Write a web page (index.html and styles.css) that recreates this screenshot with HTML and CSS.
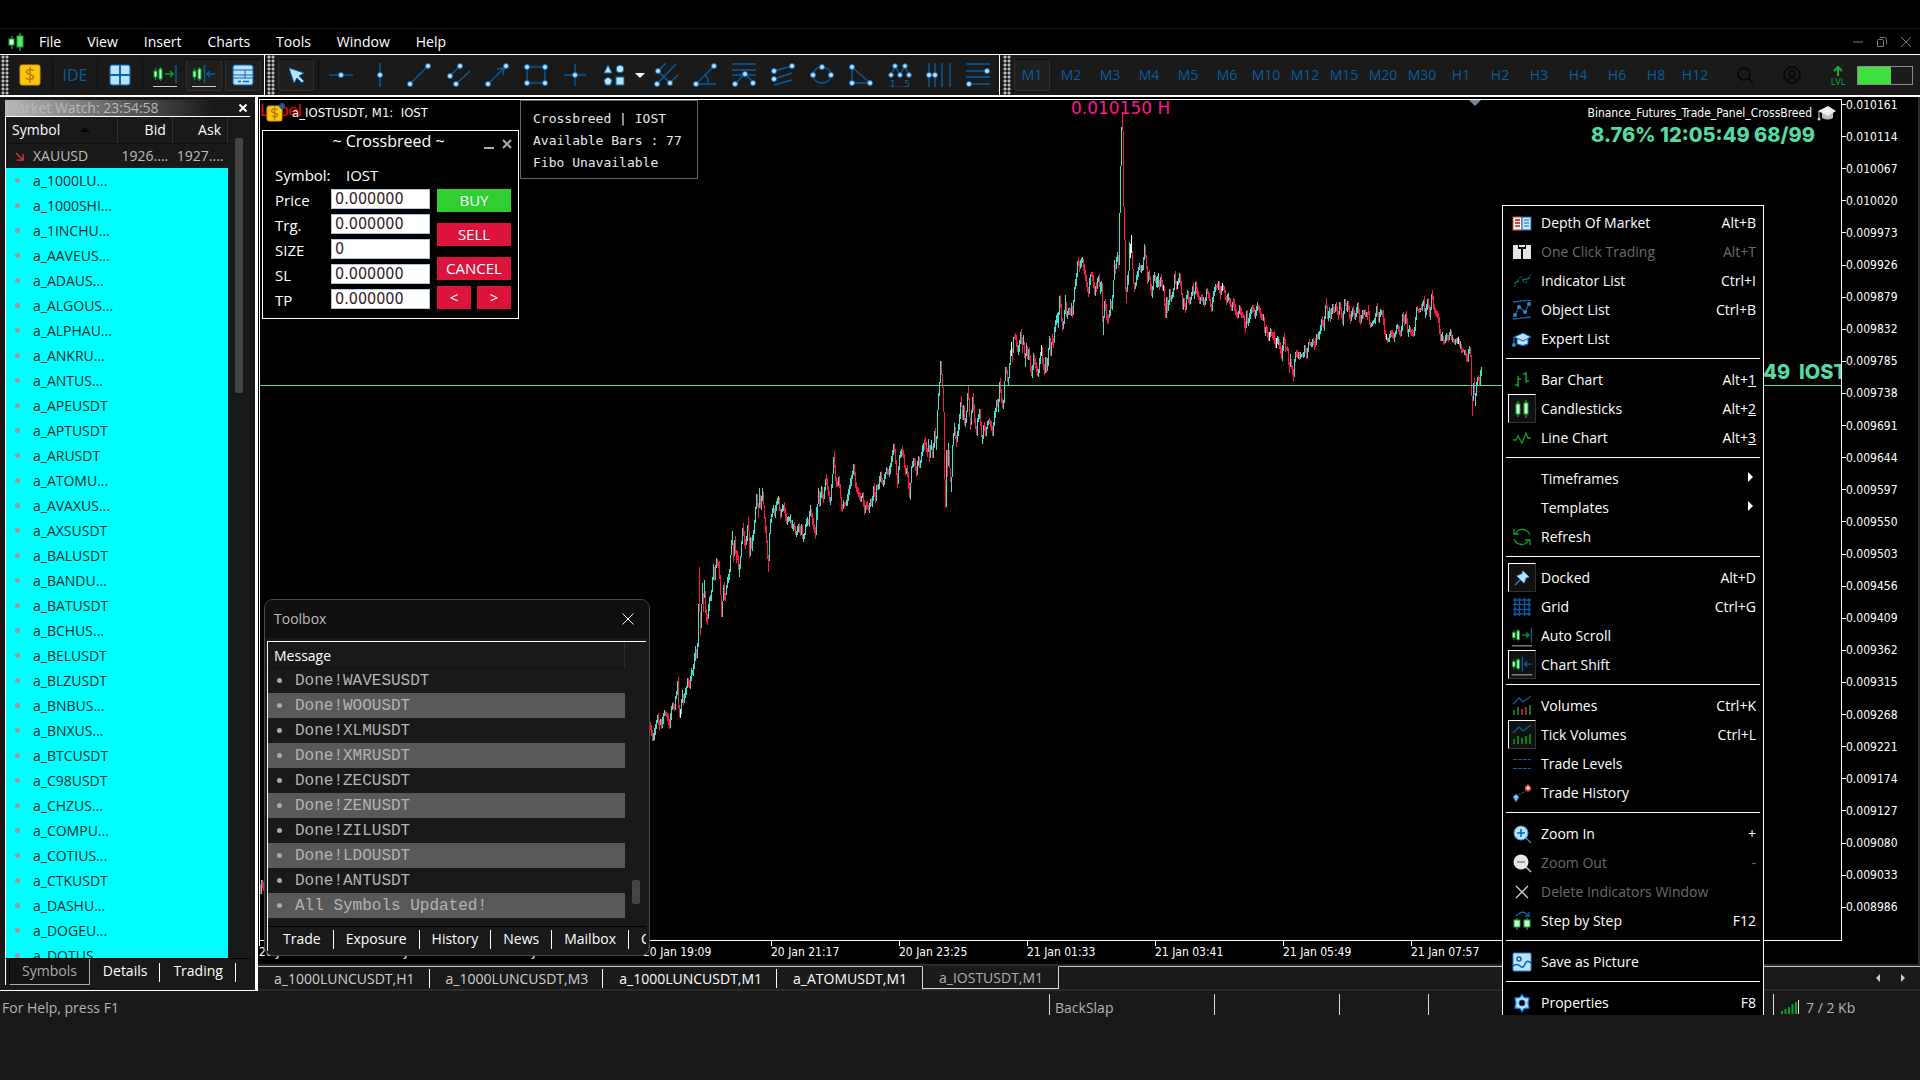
FILE: index.html
```html
<!DOCTYPE html>
<html lang="en">
<head>
<meta charset="utf-8">
<title>a_IOSTUSDT, M1</title>
<link rel="stylesheet" href="styles.css">
</head>
<body>
<svg class="defs" aria-hidden="true">
  <symbol id="t-coin" viewBox="-14 -14 28 28"><rect x="-10" y="-10" width="20" height="20" rx="2" fill="#ffc808" stroke="#d99a00"/><path d="M3.500-4c-1-2-7-2-7 1s7 2 7 5-6 3-7.500.8M0-8V8" fill="none" stroke="#b87a00" stroke-width="1.500"/></symbol>
  <symbol id="t-coinplus" viewBox="-10 -10 20 20"><rect x="-8" y="-7" width="15" height="15" rx="2" fill="#ffc808" stroke="#d99a00"/><path d="M2.500-3c-1-1.500-6-1.500-6 1s6 1.500 6 4-5 2-6 .5M-.5-6V7" fill="none" stroke="#b87a00" stroke-width="1.300"/><path d="M7-10V-4M4-7H10" stroke="#0b64ab" stroke-width="3"/></symbol>
  <symbol id="t-win" viewBox="-14 -14 28 28"><rect x="-10" y="-10" width="20" height="20" rx="2" fill="#b9e2ff" stroke="#0b64ab"/><path d="M-10 0H10M0-10V10" stroke="#0b64ab" stroke-width="2"/></symbol>
  <symbol id="t-scroll" viewBox="-14 -14 28 28"><path d="M-9.500-7V5M-4.500-8V6" stroke="#08a028"/><rect x="-11" y="-4" width="3" height="6" fill="#b4ffc0" stroke="#08a028"/><rect x="-6" y="-6" width="3" height="10" fill="#b4ffc0" stroke="#08a028"/><path d="M0-1H8M5-4L8-1L5 2" fill="none" stroke="#08a028" stroke-width="1.500"/><path d="M11-10V8" stroke="#0b5c9c" stroke-width="1.500"/><path d="M-12 11.500H12" stroke="#d0d0d0"/></symbol>
  <symbol id="t-shift" viewBox="-14 -14 28 28"><path d="M-9.500-7V5M-4.500-8V6" stroke="#08a028"/><rect x="-11" y="-4" width="3" height="6" fill="#b4ffc0" stroke="#08a028"/><rect x="-6" y="-6" width="3" height="10" fill="#b4ffc0" stroke="#08a028"/><path d="M11-1H3M6-4L3-1L6 2M.5-10V8" fill="none" stroke="#0b5c9c" stroke-width="1.500"/><path d="M-12 11.500H12" stroke="#d0d0d0"/></symbol>
  <symbol id="t-panel" viewBox="-14 -14 28 28"><rect x="-10" y="-10" width="20" height="20" rx="2" fill="#b9e2ff" stroke="#0b64ab"/><path d="M-10-5H10M-10 0H10M2-5V3M-10 3H10" stroke="#0b64ab"/><path d="M-5 6.500H-2M0 6.500H6" stroke="#0b64ab" stroke-width="1.500"/></symbol>
  <symbol id="t-cursor" viewBox="-14 -14 28 28"><path d="M-7-7L8-2L3 1L8 6L6 8L1 3L-2 8Z" fill="#b9e2ff" stroke="#0b64ab"/></symbol>
  <symbol id="t-hline" viewBox="-14 -14 28 28"><g class="draw"><path d="M-12 0H12"/><circle r="2.500"/></g></symbol>
  <symbol id="t-vline" viewBox="-14 -14 28 28"><g class="draw"><path d="M0-12V12"/><circle r="2.500"/></g></symbol>
  <symbol id="t-trend" viewBox="-14 -14 28 28"><g class="draw"><path d="M-9 9L9-9"/><circle cx="-9" cy="9" r="2.500"/><circle cx="9" cy="-9" r="2.500"/></g></symbol>
  <symbol id="t-channel" viewBox="-14 -14 28 28"><g class="draw"><path d="M-8 1L2-9M-2 9L12-4"/><circle cx="-8" cy="1" r="2.500"/><circle cx="2" cy="-9" r="2.500"/><circle cx="-2" cy="9" r="2.500"/></g></symbol>
  <symbol id="t-arrow" viewBox="-14 -14 28 28"><g class="draw"><path d="M-9 9L9-9M0-6L7-7L6 0"/><circle cx="-9" cy="9" r="2.500"/><circle cx="9" cy="-9" r="2.500"/></g></symbol>
  <symbol id="t-rect" viewBox="-14 -14 28 28"><g class="draw"><path d="M-9-8H9V8H-9Z"/><circle cx="-9" cy="-8" r="2.500"/><circle cx="9" cy="-8" r="2.500"/><circle cx="-9" cy="8" r="2.500"/><circle cx="9" cy="8" r="2.500"/></g></symbol>
  <symbol id="t-cross" viewBox="-14 -14 28 28"><g class="draw"><path d="M-11 0H11M0-11V11"/><circle r="2.500"/></g></symbol>
  <symbol id="t-shapes" viewBox="-14 -14 28 28"><g fill="#b9e2ff" stroke="#0b64ab"><path d="M-6-10L-2-2H-10Z"/><circle cx="6" cy="-6" r="3.800"/><path d="M-6 2L-2 5L-3.500 10H-8.500L-10 5Z"/><rect x="2" y="2" width="8" height="8"/></g></symbol>
  <symbol id="t-fork" viewBox="-14 -14 28 28"><g class="draw"><path d="M-9 9L10-11M-8-4L4 8M-8-4L0-12M4 8L12 0"/><circle cx="-8" cy="-4" r="2.500"/><circle cx="-9" cy="9" r="2.500"/><circle cx="4" cy="8" r="2.500"/></g></symbol>
  <symbol id="t-angle" viewBox="-14 -14 28 28"><g class="draw"><path d="M-9 9L9-9M-9 9H11M0 0Q4 3 3 9"/><circle cx="-9" cy="9" r="2.500"/><circle cx="9" cy="-9" r="2.500"/></g></symbol>
  <symbol id="t-fibo" viewBox="-14 -14 28 28"><g class="draw"><path d="M-12-11H12M-12-5H12M-12 0H12M-9 9L1-1L9 7"/><circle cx="1" cy="-1" r="2.500"/><circle cx="-9" cy="9" r="2.500"/><circle cx="9" cy="8" r="2.500"/></g></symbol>
  <symbol id="t-fibch" viewBox="-14 -14 28 28"><g class="draw"><path d="M-9-4L9-9M-9 4L9-2M-9 10L9 5"/><circle cx="-9" cy="-4" r="2.500"/><circle cx="-9" cy="4" r="2.500"/><circle cx="9" cy="-9" r="2.500"/></g></symbol>
  <symbol id="t-cycle" viewBox="-14 -14 28 28"><g class="draw"><path d="M-9 0A9 8 0 1 1 9 0A9 8 0 1 1-9 0"/><circle cx="0" cy="-8" r="2.500"/><circle cx="-9" cy="0" r="2.500"/><circle cx="9" cy="0" r="2.500"/></g></symbol>
  <symbol id="t-tri" viewBox="-14 -14 28 28"><g class="draw"><path d="M-9-8V8H9Z"/><circle cx="-9" cy="-8" r="2.500"/><circle cx="-9" cy="8" r="2.500"/><circle cx="9" cy="8" r="2.500"/></g></symbol>
  <symbol id="t-elliott" viewBox="-14 -14 28 28"><g class="draw"><path d="M-9 0L-5-9L0 0L5-9L9 0"/><circle cx="-9" cy="0" r="2.300"/><circle cx="-5" cy="-9" r="2.300"/><circle cx="0" cy="0" r="2.300"/><circle cx="5" cy="-9" r="2.300"/><circle cx="9" cy="0" r="2.300"/></g><text x="0" y="12" text-anchor="middle" font-family="DejaVu Sans" font-size="9" fill="#0b64ab">1...5</text></symbol>
  <symbol id="t-zones" viewBox="-14 -14 28 28"><g class="draw"><path d="M-10-12V12M-4-12V12M3-12V12M11-12V12"/><circle cx="-10" r="2.500"/><circle cx="-4" r="2.500"/></g></symbol>
  <symbol id="t-retr" viewBox="-14 -14 28 28"><g class="draw"><path d="M-12-11H12M-12-4H12M-12 2H12M-12 9H12"/><circle cx="9" cy="-4" r="2.500"/><circle cx="-9" cy="9" r="2.500"/></g></symbol>
  <symbol id="t-search" viewBox="-14 -14 28 28"><g fill="none" stroke="#050505" stroke-width="1.500"><circle cx="-1" cy="-1" r="6"/><path d="M3.500 3.500L8 8"/></g></symbol>
  <symbol id="t-user" viewBox="-14 -14 28 28"><g fill="none" stroke="#050505" stroke-width="1.500"><circle r="8"/><circle cy="-2" r="2.500"/><path d="M-5 6Q0-1 5 6"/></g></symbol>
  <symbol id="t-lvl" viewBox="-14 -14 28 28"><path d="M0 1V-7M-4-4L0-8L4-4" fill="none" stroke="#10b030" stroke-width="2"/><text x="0" y="10" text-anchor="middle" font-family="Open Sans" font-size="9" fill="#10b030">LVL</text></symbol>

  <symbol id="m-dom" viewBox="-10 -10 20 20"><rect x="-9" y="-6" width="9" height="13" fill="#fff" stroke="#e0433c"/><rect x="0" y="-6" width="9" height="13" fill="#cbe8ff" stroke="#0b64ab"/><path d="M-7-3H-2M-7 0H-2M-7 3H-2" stroke="#e0433c" stroke-width="2"/><path d="M2-3H7M2 0H7M2 3H7" stroke="#0b64ab"/></symbol>
  <symbol id="m-oct" viewBox="-10 -10 20 20"><path d="M-9-7H-4V-3H-1V7H-9ZM9-7H4V-3H1V7H9ZM-3-7H3V-5H-3Z" fill="#e4e4e4"/></symbol>
  <symbol id="m-ind" viewBox="-10 -10 20 20"><path d="M-8 6L-5 1L-3-3Q0-6 1-1Q2 5 5 0L9-7" fill="none" stroke="#0b5c9c" stroke-dasharray="4 1"/><path d="M-8 2L-3 0M1-1L8-3" stroke="#08a028"/></symbol>
  <symbol id="m-obj" viewBox="-10 -10 20 20"><path d="M-9-8L9-10M-9 9L9 7M-7 5L-3-3L3 2L7-6" fill="none" stroke="#0b64ab" stroke-width="1.300"/><g fill="#2a86cf"><circle cx="-7" cy="5" r="2"/><circle cx="-3" cy="-3" r="2"/><circle cx="3" cy="2" r="2"/><circle cx="7" cy="-6" r="2"/></g></symbol>
  <symbol id="m-cap" viewBox="-10 -10 20 20"><path d="M-5 0V5Q1 8 6 5V0" fill="#b9e2ff" stroke="#0b64ab"/><path d="M-8-2L1-6L9-2L1 2Z" fill="#b9e2ff" stroke="#0b64ab"/><path d="M-8-2V5" stroke="#2a86cf"/><circle cx="-8" cy="6" r="2" fill="#2a86cf"/></symbol>
  <symbol id="m-capg" viewBox="-10 -10 20 20"><path d="M-5 0V5Q1 8 6 5V0Z" fill="#bbb"/><path d="M-9-2L1-7L9-2L1 3Z" fill="#eee"/><path d="M-8-2V5" stroke="#ccc"/><circle cx="-8" cy="6" r="1.500" fill="#ccc"/></symbol>
  <symbol id="m-bar" viewBox="-10 -10 20 20"><path d="M-4-4V7M-7 5H-4M-4-1H-1M4-8V3M1-6H4M4 1H7" fill="none" stroke="#08a028" stroke-width="1.500"/></symbol>
  <symbol id="m-candle" viewBox="-10 -10 20 20"><path d="M-4-8V8M4-9V9" stroke="#08a028" stroke-width="1.500"/><rect x="-6" y="-5" width="4" height="10" fill="#c8ffd0" stroke="#0cb030"/><rect x="2" y="-6" width="4" height="11" fill="#c8ffd0" stroke="#0cb030"/></symbol>
  <symbol id="m-logo" viewBox="-10 -10 20 20"><path d="M-4-6V7M4-9V9" stroke="#08a028" stroke-width="1.500"/><rect x="-7" y="-3" width="5" height="6" fill="#c8ffd0" stroke="#0cb030"/><rect x="1" y="-6" width="6" height="11" fill="#5fe070" stroke="#0cb030"/></symbol>
  <symbol id="m-line" viewBox="-10 -10 20 20"><path d="M-9 2H-6L-4-2L0 5L4-5L6 0H9" fill="none" stroke="#08a028" stroke-width="1.300"/></symbol>
  <symbol id="m-refresh" viewBox="-10 -10 20 20"><path d="M-7-3Q-4-8 1-7.500Q6-7 8-2M-8-8V-3H-3M7 3Q4 8-1 7.500Q-6 7-8 2M8 8V3H3" fill="none" stroke="#08a028" stroke-width="1.300"/></symbol>
  <symbol id="m-pin" viewBox="-10 -10 20 20"><path d="M-7 7L-1 1" stroke="#2a86cf" stroke-width="1.500"/><path d="M1-7L7-1L4-0.500L2 5L-5-2L0-4Z" fill="#b9e2ff" stroke="#5db2ef"/></symbol>
  <symbol id="m-grid" viewBox="-10 -10 20 20"><path d="M-7-9V9M-2.500-9V9M2.500-9V9M7-9V9M-9-7H9M-9-2.500H9M-9 2.500H9M-9 7H9" stroke="#0b5ca8" stroke-width="1.300"/></symbol>
  <symbol id="m-vol" viewBox="-10 -10 20 20"><path d="M-9-2L-3-8L1-4L9-10" fill="none" stroke="#0b5c9c" stroke-width="1.300"/><path d="M-8 4V9M-4 1V9M8-1V9" stroke="#08a028" stroke-width="1.500"/><path d="M0 3V9M4 1V9" stroke="#e0332c" stroke-width="1.500"/></symbol>
  <symbol id="m-tick" viewBox="-10 -10 20 20"><path d="M-9-2L-3-8L1-4L9-10" fill="none" stroke="#0b5c9c" stroke-width="1.300"/><path d="M-8 4V9M-4 1V9M0 3V9M4 1V9M8-1V9" stroke="#08a028" stroke-width="1.500"/></symbol>
  <symbol id="m-lev" viewBox="-10 -10 20 20"><path d="M-9-4.500H9M-9 4.500H9" stroke="#0b5c9c" stroke-dasharray="4 1"/></symbol>
  <symbol id="m-hist" viewBox="-10 -10 20 20"><path d="M-4 2L4-2" stroke="#0b5c9c" stroke-dasharray="3 1"/><path d="M6-9L9-6V-3L6-1L3-3V-6Z" fill="#e0433c"/><path d="M6-7V-3M4-5H8" stroke="#fff"/><path d="M-6 1L-3 4L-6 9L-9 4Z" fill="#7dc2f5" stroke="#0b64ab"/></symbol>
  <symbol id="m-zin" viewBox="-10 -10 20 20"><path d="M4 4L9 9" stroke="#2a86cf" stroke-width="1.500"/><circle cx="-1" cy="-1" r="7" fill="#b9e2ff" stroke="#3a96df"/><path d="M-5-1H3M-1-5V3" stroke="#0b64ab" stroke-width="1.500"/></symbol>
  <symbol id="m-zout" viewBox="-10 -10 20 20"><path d="M4 4L9 9" stroke="#c8c8c8" stroke-width="1.500"/><circle cx="-1" cy="-1" r="7.500" fill="#e6e6e6"/><path d="M-5-1H3" stroke="#888" stroke-width="1.500"/></symbol>
  <symbol id="m-del" viewBox="-10 -10 20 20"><path d="M-6-6L6 6M6-6L-6 6" stroke="#d0d0d0" stroke-width="1.300"/></symbol>
  <symbol id="m-step" viewBox="-10 -10 20 20"><path d="M-6-5Q0-12 6-6M7-9V-5H3" fill="none" stroke="#0b64ab" stroke-width="1.300"/><path d="M-5-3V9M5-3V9" stroke="#08a028" stroke-width="1.300"/><rect x="-8" y="-1" width="6" height="7" fill="#c8ffd0" stroke="#0cb030"/><rect x="2" y="-1" width="6" height="7" fill="#c8ffd0" stroke="#0cb030"/></symbol>
  <symbol id="m-pic" viewBox="-10 -10 20 20"><rect x="-9" y="-9" width="18" height="18" rx="1" fill="#b9e2ff" stroke="#2a86cf"/><circle cx="-3" cy="-3" r="2" fill="none" stroke="#0b64ab" stroke-width="1.500"/><path d="M-9 4Q-5 1-2 4T3 2T9 1" fill="none" stroke="#0b64ab" stroke-width="1.500"/></symbol>
  <symbol id="m-gear" viewBox="-10 -10 20 20"><path d="M0-8.500L2-5.500L7-5L6 0L7 5L2 5.500L0 8.500L-2 5.500L-7 5L-6 0L-7-5L-2-5.500Z" fill="#b9e2ff" stroke="#0b80df" stroke-width="1.300"/><circle r="3" fill="#000" stroke="#0b64ab"/></symbol>
</svg>

<div class="app">
  <div class="titlebar"></div>
  <header class="menubar">
    <svg class="ic20"><use href="#m-logo"/></svg>
    <nav>
      <button>File</button><button>View</button><button>Insert</button><button>Charts</button><button>Tools</button><button>Window</button><button>Help</button>
    </nav>
    <div class="winctl">
      <button aria-label="Minimize"><svg viewBox="0 0 12 12"><path d="M1 6H11"/></svg></button>
      <button aria-label="Restore"><svg viewBox="0 0 12 12"><path d="M1.500 4.500Q1.500 3.500 2.500 3.500H6.500Q7.500 3.500 7.500 4.500V10.500H1.500ZM3.500 1.500H8.500Q10.500 1.500 10.500 3.500V8.500"/></svg></button>
      <button aria-label="Close"><svg viewBox="0 0 12 12"><path d="M1 1L11 11M11 1L1 11"/></svg></button>
    </div>
  </header>

  <div class="toolbar">
    <div class="group first">
      <i class="grip"></i>
      <button aria-label="New order"><svg class="ic"><use href="#t-coin"/></svg></button><i class="sep"></i>
      <button class="ide">IDE</button><i class="sep"></i>
      <button aria-label="Tile"><svg class="ic"><use href="#t-win"/></svg></button><i class="sep"></i>
      <button aria-label="Auto scroll"><svg class="ic"><use href="#t-scroll"/></svg></button>
      <button class="on" aria-label="Chart shift"><svg class="ic"><use href="#t-shift"/></svg></button>
      <button class="on" aria-label="Data panel"><svg class="ic"><use href="#t-panel"/></svg></button>
    </div>
    <div class="group">
      <i class="grip"></i>
      <button class="on" aria-label="Cursor"><svg class="ic"><use href="#t-cursor"/></svg></button><i class="sep"></i>
      <button aria-label="Horizontal line"><svg class="ic"><use href="#t-hline"/></svg></button>
      <button aria-label="Vertical line"><svg class="ic"><use href="#t-vline"/></svg></button>
      <button aria-label="Trend line"><svg class="ic"><use href="#t-trend"/></svg></button>
      <button aria-label="Channel"><svg class="ic"><use href="#t-channel"/></svg></button>
      <button aria-label="Arrow line"><svg class="ic"><use href="#t-arrow"/></svg></button>
      <button aria-label="Rectangle"><svg class="ic"><use href="#t-rect"/></svg></button>
      <button aria-label="Crosshair"><svg class="ic"><use href="#t-cross"/></svg></button>
      <button aria-label="Shapes"><svg class="ic"><use href="#t-shapes"/></svg></button>
      <button class="drop" aria-label="More shapes"></button>
      <button aria-label="Pitchfork"><svg class="ic"><use href="#t-fork"/></svg></button>
      <button aria-label="Angle"><svg class="ic"><use href="#t-angle"/></svg></button>
      <button aria-label="Fibonacci fan"><svg class="ic"><use href="#t-fibo"/></svg></button>
      <button aria-label="Fibonacci channel"><svg class="ic"><use href="#t-fibch"/></svg></button>
      <button aria-label="Ellipse"><svg class="ic"><use href="#t-cycle"/></svg></button>
      <button aria-label="Triangle"><svg class="ic"><use href="#t-tri"/></svg></button>
      <button aria-label="Elliott wave"><svg class="ic"><use href="#t-elliott"/></svg></button>
      <button aria-label="Time zones"><svg class="ic"><use href="#t-zones"/></svg></button>
      <button aria-label="Retracement"><svg class="ic"><use href="#t-retr"/></svg></button>
    </div>
    <div class="group frames">
      <i class="grip"></i>
      <button class="on">M1</button><button>M2</button><button>M3</button><button>M4</button><button>M5</button><button>M6</button><button>M10</button><button>M12</button><button>M15</button><button>M20</button><button>M30</button><button>H1</button><button>H2</button><button>H3</button><button>H4</button><button>H6</button><button>H8</button><button>H12</button>
      <div class="right">
        <button aria-label="Search"><svg class="ic"><use href="#t-search"/></svg></button>
        <button aria-label="Account"><svg class="ic"><use href="#t-user"/></svg></button>
        <button class="lvl" aria-label="Level"><svg class="ic"><use href="#t-lvl"/></svg></button>
        <div class="battery"><i></i></div>
      </div>
    </div>
  </div>

  <main>
    <aside class="watch">
      <div class="watch-title"><h2>Market Watch: 23:54:58</h2><button aria-label="Close market watch"><svg viewBox="0 0 8 8"><path d="M0.500 0.500L7.500 7.500M7.500 0.500L0.500 7.500"/></svg></button></div>
      <div class="watch-body">
        <table>
          <thead><tr><th class="sym">Symbol<i class="sort"></i></th><th>Bid</th><th>Ask</th></tr></thead>
          <tbody id="rows">
            <tr class="gold"><td><svg class="fall" viewBox="0 0 10 10"><path d="M1 1L9 9M9 2V9H2"/></svg>XAUUSD</td><td>1926....</td><td>1927....</td></tr>
          </tbody>
        </table>
        <i class="thumb"></i>
      </div>
      <div class="watch-tabs"><button class="active">Symbols</button><button>Details</button><button>Trading</button></div>
    </aside>

    <section class="charts">
      <div class="window">
        <div class="plot">
          <svg class="series" id="series" viewBox="0 0 4743 2520" preserveAspectRatio="none">
            <path class="up" id="up"/><path class="down" id="down"/><path class="flat" id="flat"/>
            <path class="bid" d="M0 856H4743"/>
          </svg>
          <span class="obj-label">Label</span>
          <div class="chart-name"><svg class="ic20"><use href="#t-coinplus"/></svg><span>a_IOSTUSDT, M1:&nbsp; IOST</span></div>
          <span class="high">0.010150 H</span>
          <i class="shift-mark"></i>
          <div class="expert"><span>Binance_Futures_Trade_Panel_CrossBreed</span><svg class="ic20"><use href="#m-capg"/></svg></div>
          <span class="stats">8.76% 12:05:49 68/99</span>
          <span class="stats tail">49&nbsp; IOST</span>

          <div class="info"><p>Crossbreed | IOST</p><p>Available Bars : 77</p><p>Fibo Unavailable</p></div>

          <form class="panel">
            <div class="panel-head"><span></span><h3>~ Crossbreed ~</h3><span class="ctl"><button type="button" aria-label="Collapse panel"><svg viewBox="0 0 10 10"><path d="M0 9H10"/></svg></button><button type="button" aria-label="Close panel"><svg viewBox="0 0 10 10"><path d="M1 1L9 9M9 1L1 9"/></svg></button></span></div>
            <div class="symbol"><span>Symbol:</span><span>IOST</span></div>
            <div class="panel-body">
              <div class="fields">
                <label for="f1">Price</label><input id="f1" value="0.000000">
                <label for="f2">Trg.</label><input id="f2" value="0.000000">
                <label for="f3">SIZE</label><input id="f3" value="0">
                <label for="f4">SL</label><input id="f4" value="0.000000">
                <label for="f5">TP</label><input id="f5" value="0.000000">
              </div>
              <div class="acts">
                <button type="button" class="buy">BUY</button>
                <button type="button">SELL</button>
                <button type="button">CANCEL</button>
                <div><button type="button">&lt;</button><button type="button">&gt;</button></div>
              </div>
            </div>
          </form>
        </div>
        <div class="prices" id="prices"></div>
        <div class="times"><span>20 Jan 12:45</span><span>20 Jan 14:53</span><span>20 Jan 17:01</span><span>20 Jan 19:09</span><span>20 Jan 21:17</span><span>20 Jan 23:25</span><span>21 Jan 01:33</span><span>21 Jan 03:41</span><span>21 Jan 05:49</span><span>21 Jan 07:57</span></div>
      </div>
      <div class="chart-tabs">
        <button class="dim">a_1000LUNCUSDT,H1</button><button class="dim">a_1000LUNCUSDT,M3</button><button>a_1000LUNCUSDT,M1</button><button class="last">a_ATOMUSDT,M1</button><button class="active">a_IOSTUSDT,M1</button>
        <div class="rest"><button class="prev" aria-label="Previous tab"></button><button class="next" aria-label="Next tab"></button></div>
      </div>

      <div class="toolbox">
        <div class="tb-head"><h2>Toolbox</h2><button aria-label="Close toolbox"><svg viewBox="0 0 12 12"><path d="M0.500 0.500L11.500 11.500M11.500 0.500L0.500 11.500"/></svg></button></div>
        <div class="tb-frame">
          <div class="tb-log">
            <h3>Message</h3>
            <ul>
              <li>Done!WAVESUSDT</li><li>Done!WOOUSDT</li><li>Done!XLMUSDT</li><li>Done!XMRUSDT</li><li>Done!ZECUSDT</li><li>Done!ZENUSDT</li><li>Done!ZILUSDT</li><li>Done!LDOUSDT</li><li>Done!ANTUSDT</li><li>All Symbols Updated!</li>
            </ul>
            <i class="thumb"></i>
          </div>
          <div class="tb-tabs"><button>Trade</button><button>Exposure</button><button>History</button><button>News</button><button>Mailbox</button><button>Calendar</button></div>
        </div>
      </div>
    </section>
  </main>

  <footer class="status">
    <span class="help">For Help, press F1</span>
    <span class="cell profile">BackSlap</span><span class="cell c2"></span><span class="cell c3"></span><span class="cell c4"></span>
    <span class="cell net"><svg viewBox="0 0 18 14"><path d="M1 11V14M4.500 9V14M8 7V14M11.500 4V14M15 2V14" stroke="#08a028" stroke-width="2"/><path d="M17.500 0V14" stroke="#eee"/></svg>7 / 2 Kb</span>
  </footer>

  <div class="context" role="menu">
    <button role="menuitem"><i><svg class="ic20"><use href="#m-dom"/></svg></i>Depth Of Market<span>Alt+B</span></button>
    <button role="menuitem" disabled><i><svg class="ic20"><use href="#m-oct"/></svg></i>One Click Trading<span>Alt+T</span></button>
    <button role="menuitem"><i><svg class="ic20"><use href="#m-ind"/></svg></i>Indicator List<span>Ctrl+I</span></button>
    <button role="menuitem"><i><svg class="ic20"><use href="#m-obj"/></svg></i>Object List<span>Ctrl+B</span></button>
    <button role="menuitem"><i><svg class="ic20"><use href="#m-cap"/></svg></i>Expert List</button>
    <hr>
    <button role="menuitem"><i><svg class="ic20"><use href="#m-bar"/></svg></i>Bar Chart<span>Alt+<u>1</u></span></button>
    <button role="menuitem"><i class="on"><svg class="ic20"><use href="#m-candle"/></svg></i>Candlesticks<span>Alt+<u>2</u></span></button>
    <button role="menuitem"><i><svg class="ic20"><use href="#m-line"/></svg></i>Line Chart<span>Alt+<u>3</u></span></button>
    <hr>
    <button role="menuitem"><i></i>Timeframes<span class="sub"></span></button>
    <button role="menuitem"><i></i>Templates<span class="sub"></span></button>
    <button role="menuitem"><i><svg class="ic20"><use href="#m-refresh"/></svg></i>Refresh</button>
    <hr>
    <button role="menuitem"><i class="on"><svg class="ic20"><use href="#m-pin"/></svg></i>Docked<span>Alt+D</span></button>
    <button role="menuitem"><i><svg class="ic20"><use href="#m-grid"/></svg></i>Grid<span>Ctrl+G</span></button>
    <button role="menuitem"><i><svg class="ic22"><use href="#t-scroll"/></svg></i>Auto Scroll</button>
    <button role="menuitem"><i class="on"><svg class="ic22"><use href="#t-shift"/></svg></i>Chart Shift</button>
    <hr>
    <button role="menuitem"><i><svg class="ic20"><use href="#m-vol"/></svg></i>Volumes<span>Ctrl+K</span></button>
    <button role="menuitem"><i class="on"><svg class="ic20"><use href="#m-tick"/></svg></i>Tick Volumes<span>Ctrl+L</span></button>
    <button role="menuitem"><i><svg class="ic20"><use href="#m-lev"/></svg></i>Trade Levels</button>
    <button role="menuitem"><i><svg class="ic20"><use href="#m-hist"/></svg></i>Trade History</button>
    <hr>
    <button role="menuitem"><i><svg class="ic20"><use href="#m-zin"/></svg></i>Zoom In<span>+</span></button>
    <button role="menuitem" disabled><i><svg class="ic20"><use href="#m-zout"/></svg></i>Zoom Out<span>-</span></button>
    <button role="menuitem" disabled><i><svg class="ic20"><use href="#m-del"/></svg></i>Delete Indicators Window</button>
    <button role="menuitem"><i><svg class="ic20"><use href="#m-step"/></svg></i>Step by Step<span>F12</span></button>
    <hr>
    <button role="menuitem"><i><svg class="ic20"><use href="#m-pic"/></svg></i>Save as Picture</button>
    <hr>
    <button role="menuitem"><i><svg class="ic20"><use href="#m-gear"/></svg></i>Properties<span>F8</span></button>
  </div>
</div>
<script src="script.js"></script>
</body>
</html>
```
FILE: styles.css
```css
* { box-sizing: border-box; }
body { margin: 0; background: #181818; color: #fff; font: 14px/20px "Open Sans", "Noto Sans", sans-serif; }
button { margin: 0; padding: 0; border: 0; background: none; color: inherit; font: inherit; }
h2, h3, p, ul { margin: 0; padding: 0; font: inherit; list-style: none; }
i { font-style: normal; }
svg { display: block; }
.defs { position: absolute; width: 0; height: 0; }
.draw path { fill: none; stroke: #0b5c9c; stroke-width: 1.4; }
.draw circle { fill: #b9e2ff; stroke: #1670b8; }
.ic { width: 28px; height: 28px; }
.ic20 { width: 20px; height: 20px; }
.ic22 { width: 24px; height: 24px; }

.app { position: relative; display: flex; flex-direction: column; height: 100vh; overflow: hidden; padding-bottom: 56px; }
.titlebar { flex: none; height: 29px; background: #000; border-bottom: 1px solid #141414; }
.menubar { flex: none; display: flex; align-items: center; height: 26px; padding-left: 6px; background: #000; border-bottom: 1px solid #fff; }
.menubar nav { display: flex; }
.menubar nav button { padding: 0 13px; }
.winctl { display: flex; gap: 12px; margin-left: auto; padding-right: 8px; }
.winctl svg { width: 12px; height: 12px; fill: none; stroke: #777; }

.toolbar { flex: none; display: flex; height: 42px; background: #1a1a1a; border-bottom: 2px solid #fff; }
.group { display: flex; align-items: center; gap: 3px; padding: 0 3px 0 2px; border-right: 1px solid #fff; }
.group.first { padding-left: 1px; }
.group button { display: flex; align-items: center; justify-content: center; flex: none; width: 36px; height: 32px; }
.group button.on { border: 1px solid #2e2e2e; border-top-color: #0c0c0c; border-radius: 3px; background: #1f1f1f; }
.grip { flex: none; align-self: stretch; width: 8px; background: radial-gradient(circle, #bbb 1px, transparent 2px) 0 0 / 4px 4px; }
.sep { flex: none; width: 1px; height: 32px; margin: 0 1px; background: #0d0d0d; }
.ide { color: #0b5c9c; font-size: 16px; }
.group button.drop { width: 10px; }
.drop::before { content: ""; border: 5px solid transparent; border-top-color: #fff; border-bottom: 0; }
.frames { flex: 1; min-width: 0; border-right: 0; padding: 0 7px 0 3px; color: #0b5c9c; }
.right { display: flex; align-items: center; gap: 11px; margin-left: auto; }
.right .lvl { width: 34px; }
.battery { width: 56px; height: 19px; margin-left: -9px; border: 1px solid #8a8a8a; background: #1c1c1c; }
.battery i { display: block; width: 62%; height: 100%; background: #41e041; }

main { flex: 1; min-height: 0; display: flex; background: #000; }
.watch { flex: none; display: flex; flex-direction: column; width: 258px; padding: 2px 5px 5px 5px; background: #191919; border-right: 3px solid #fff; border-bottom: 1px solid #fff; }
.watch-title { display: flex; justify-content: space-between; align-items: center; height: 18px; padding-right: 3px; border-bottom: 1px solid #fff; }
.watch-title h2 { flex: 1; margin-right: 14px; height: 16px; line-height: 15px; color: #b8b8b8; background: linear-gradient(90deg, #b8b8b8, #191919 95%); }
.watch-title svg { width: 8px; height: 8px; stroke: #fff; stroke-width: 2; }
.watch-body { flex: 1; min-height: 0; display: flex; justify-content: space-between; overflow: hidden; border-left: 1px solid #fff; border-bottom: 1px solid #000; }
.watch table { width: 222px; height: 0; border-collapse: collapse; table-layout: fixed; }
.watch th { height: 26px; padding: 0 6px 0 0; border-right: 1px solid #303030; border-bottom: 1px solid #101010; font-weight: 400; text-align: right; }
.watch th.sym { width: 111px; padding-left: 6px; text-align: left; }
.sort { display: inline-block; margin: 0 0 3px 20px; border: 5px solid transparent; border-bottom-color: #050505; border-top: 0; }
.watch td { height: 25px; padding: 0; line-height: 20px; white-space: nowrap; color: #042c2c; background: #0ff; }
.watch .gold td { color: #bdbdbd; background: none; text-align: right; padding-right: 4px; }
.watch td:first-child, .watch .gold td:first-child { text-align: left; padding-left: 9px; }
.dot::before { content: ""; display: inline-block; width: 5px; height: 5px; margin: 0 13px 3px 0; border-radius: 3px; background: #9a9a9a; }
.fall { display: inline-block; width: 9px; height: 9px; margin-right: 9px; fill: none; stroke: #d83a30; stroke-width: 1.5; }
.thumb { display: block; width: 8px; border-radius: 2px; background: #454545; }
.watch .thumb { height: 255px; margin: 21px 7px 0 0; }
.watch-tabs { display: flex; height: 26px; padding-left: 3px; border-left: 1px solid #fff; }
.watch-tabs button { position: relative; padding: 0 13px 2px; }
.watch-tabs button.active { padding: 0 12px 2px; border: 1px solid #aaa; border-top: 0; border-left-color: #000; background: #151515; color: #aaa; }
.watch-tabs button:not(.active)::after { content: ""; position: absolute; right: 0; top: 4px; width: 1px; height: 19px; background: #fff; }

.charts { position: relative; flex: 1; min-width: 0; display: flex; flex-direction: column; }
.window { flex: 1; min-height: 0; display: grid; grid-template: minmax(0, 1fr) 23px / minmax(0, 1fr) 76px; padding: 2px 0 0 1px; background: #000; border-right: 2px solid #2b2b2b; font: 12px/12px "DejaVu Sans Condensed", "DejaVu Sans", sans-serif; }
.plot { position: relative; overflow: hidden; border: 1px solid #fff; }
.series { position: absolute; inset: 0; width: 100%; height: 100%; fill: none; stroke-width: 3; shape-rendering: crispEdges; }
.up { stroke: #40e0d0; }
.down { stroke: #ff1744; }
.flat { stroke: #fff; }
.bid { stroke: #57d9a3; }
.prices { display: flex; flex-direction: column; justify-content: space-between; padding-bottom: 28px; }
.prices span { display: flex; align-items: center; height: 11px; }
.prices span::before { content: ""; width: 4px; height: 1px; background: #fff; }
.times { grid-column: 1 / -1; display: flex; overflow: hidden; }
.times span { flex: none; width: 128px; height: 4px; padding-top: 5px; border-left: 1px solid #fff; text-indent: -1px; }

.obj-label { position: absolute; left: 0; top: 2px; color: #f00; font: 17px/18px "Liberation Sans", sans-serif; }
.chart-name { position: absolute; left: 5px; top: 3px; display: flex; align-items: center; gap: 7px; font-size: 13px; }
.high { position: absolute; left: 811px; top: 0; color: #ff1493; font: 17px/17px "DejaVu Sans", sans-serif; }
.shift-mark { position: absolute; left: 1209px; top: 0; border: 6px solid transparent; border-top-color: #778899; border-bottom: 0; }
.expert { position: absolute; right: 4px; top: 3px; display: flex; align-items: center; gap: 5px; }
.stats { position: absolute; right: 26px; top: 23px; color: #57d9a3; font: 800 20px/24px "Inter", "Liberation Sans", sans-serif; white-space: nowrap; }
.stats.tail { right: -19px; top: 260px; word-spacing: normal; }
.tail { padding-right: 13px; }
.info { position: absolute; left: 260px; top: 0; width: 178px; height: 79px; padding: 7px 12px; border: 1px solid #666; background: #000; color: #e8e8e8; font: 13px/22px "DejaVu Sans Mono", monospace; }

.panel { position: absolute; left: 2px; top: 30px; width: 257px; height: 189px; border: 1px solid #fff; background: #000; font: 15px/20px "Open Sans", sans-serif; font-weight: 500; }
.panel-head { display: grid; grid-template-columns: 1fr auto 1fr; height: 34px; }
.panel-head h3 { padding-right: 4px; font-size: 16px; line-height: 20px; }
.ctl { display: flex; justify-content: flex-end; gap: 8px; padding: 6px 6px 0 0; height: 20px; }
.ctl svg { width: 10px; height: 10px; stroke: #aaa; stroke-width: 2; }
.symbol { display: flex; padding-left: 12px; height: 24px; }
.symbol span:first-child { width: 71px; }
.panel-body { display: flex; gap: 7px; padding-left: 12px; }
.fields { display: grid; grid-template-columns: 56px 99px; grid-auto-rows: 20px; gap: 5px 0; }
.fields label { padding-top: 1px; }
.fields input { min-width: 0; height: 20px; padding: 0 3px 2px; border: 1px solid #b0c4de; background: #fff; color: #33221f; font: 16px/17px "DejaVu Sans Condensed", sans-serif; }
.acts { display: flex; flex-direction: column; gap: 11px; width: 74px; }
.acts button { height: 23px; padding-bottom: 2px; background: #dc143c; }
.acts button.buy { background: #32cd32; }
.acts div { display: flex; gap: 6px; margin-top: -5px; }
.acts div button { flex: 1; }

.chart-tabs { flex: none; display: flex; height: 27px; background: #1a1a1a; border-top: 2px solid #2b2b2b; border-bottom: 2px solid #2b2b2b; }
.chart-tabs > button { position: relative; padding: 2px 15px 0 16px; border-top: 1px solid #c0c0c4; }
.chart-tabs > .dim { color: #d0d0d0; }
.chart-tabs > button:not(.active):not(.last)::after { content: ""; position: absolute; right: 0; top: 2px; width: 1px; height: 19px; background: #fff; }
.chart-tabs > .active { padding-top: 0; border: 1px solid #d8d8d8; border-top-color: transparent; color: #b0b0b0; }
.rest { flex: 1; display: flex; align-items: center; justify-content: flex-end; gap: 21px; padding-right: 15px; border-top: 1px solid #c0c0c4; }
.rest button { border: 4px solid transparent; }
.rest .prev { border-right-color: #ccc; border-left: 0; }
.rest .next { border-left-color: #ccc; border-right: 0; }

.toolbox { position: absolute; left: 6px; bottom: 35px; display: flex; flex-direction: column; width: 386px; overflow: hidden; border: 1px solid #4a4a4a; border-radius: 9px; background: #191919; }
.tb-head { display: flex; align-items: center; justify-content: space-between; height: 38px; padding: 0 15px 0 9px; background: #101010; color: #bbb; }
.tb-head svg { width: 12px; height: 12px; stroke: #eee; }
.tb-frame { margin: 3px 3px 4px 2px; border: solid #fff; border-width: 1px 0 0 1px; }
.tb-log { display: grid; grid-template-columns: 357px 1fr; padding-bottom: 8px; border-bottom: 1px solid #000; }
.tb-log h3 { grid-column: 1; height: 26px; padding: 4px 6px; border-right: 1px solid #2c2c2c; border-bottom: 1px solid #101010; }
.tb-log ul { grid-column: 1; font: 16px/23px "Liberation Mono", monospace; color: #b4b4b4; }
.tb-log li { display: flex; align-items: center; gap: 13px; height: 25px; padding: 2px 0 0 9px; }
.tb-log li::before { content: ""; width: 5px; height: 5px; margin-bottom: 3px; border-radius: 3px; background: #aaa; }
.tb-log li:nth-child(even) { background: #595959; }
.tb-log .thumb { align-self: end; height: 24px; margin: 0 0 14px 7px; }
.tb-tabs { display: flex; height: 24px; padding-left: 3px; overflow: hidden; }
.tb-tabs button { position: relative; flex: none; padding: 0 13px 0 12px; }
.tb-tabs button::after { content: ""; position: absolute; right: 0; top: 3px; width: 1px; height: 19px; background: #fff; }

.status { flex: none; display: flex; height: 33px; padding: 3px 0 9px; color: #b4b4b4; background: #191919; }
.status .help { flex: 1; padding: 4px 0 0 2px; }
.cell { padding: 4px 0 0 5px; border-left: 1px solid #ddd; }
.profile { width: 165px; }
.c2 { width: 125px; }
.c3 { width: 89px; }
.c4 { width: 345px; }
.net { display: flex; gap: 7px; width: 147px; padding-left: 7px; }
.net svg { width: 18px; height: 14px; margin-top: 2px; }

.context { position: absolute; right: 156px; top: 205px; bottom: 65px; width: 262px; overflow: hidden; padding: 2px 3px 0; border: 1px solid #fff; border-bottom: 0; background: #000; }
.context button { display: flex; align-items: center; width: 100%; height: 29px; padding: 0 4px 0 2px; text-align: left; }
.context button:disabled { color: #6a6a6a; }
.context i { display: flex; align-items: center; justify-content: center; width: 28px; height: 29px; margin-right: 5px; border: 1px solid transparent; }
.context i.on { border-color: #fff #333 #333 #fff; background: #111; }
.context span { margin-left: auto; }
.context .sub { margin-right: 3px; margin-bottom: 4px; border: 5px solid transparent; border-left-color: #fff; border-right: 0; }
.context hr { height: 1px; margin: 5px 0 6px; border: 0; background: #fff; }
```
FILE: script.js
```js
// Market watch symbols
const symbols = ("1000LU... 1000SHI... 1INCHU... AAVEUS... ADAUS... ALGOUS... ALPHAU... ANKRU... ANTUS... APEUSDT APTUSDT ARUSDT " +
  "ATOMU... AVAXUS... AXSUSDT BALUSDT BANDU... BATUSDT BCHUS... BELUSDT BLZUSDT BNBUS... BNXUS... BTCUSDT C98USDT CHZUS... " +
  "COMPU... COTIUS... CTKUSDT DASHU... DOGEU... DOTUS...").split(" ");
const rows = document.getElementById("rows");
for (const s of symbols) {
  const tr = rows.insertRow();
  const td = tr.insertCell();
  td.className = "dot";
  td.textContent = "a_" + s;
  tr.insertCell();
  tr.insertCell();
}

// Price scale, 47 points per step
const prices = document.getElementById("prices");
for (let p = 10161; p >= 8986; p -= 47) {
  const span = document.createElement("span");
  span.textContent = "0." + String(p).padStart(6, "0");
  prices.append(span);
}

// Turning points of the price, each block relative to its own origin
const blocks = [
  { x: 0, y: 0, pts: "0,2355 3,2372 6,2345 12,2365" },
  { x: 1140, y: 840, pts: "31,1035 40,1080 55,1005 58,1040 62,1020 66,1040 73,998 82,1005 90,1038 97,975 104,985 108,952 113,935 115,890 117,985 122,1010 128,940 131,970 137,940 145,900 150,920 155,875 160,885 167,810 170,830 176,785 178,560 181,765 184,735 188,610 190,685 194,610 198,700 203,725 209,660 215,650 221,560 225,600 229,540 238,555 241,600 246,712 252,615 256,660 262,610 270,575 275,490 278,460 281,545 285,480 290,545 293,520 299,580 305,500 310,440 316,498 322,470 326,412 329,535 332,480 336,500 345,430 350,350 353,345 356,415 359,325 362,385 369,335 376,430 381,480 386,573 391,430 400,385 405,405 410,370 418,355 421,408 428,385 433,375 440,425 450,415 460,445 463,430 468,463 478,440 483,460 485,437 490,478 494,470 500,420 507,430 512,387 520,430 528,465 530,380 533,420 535,325 540,372 545,325 551,360 559,290 563,320 572,370 578,300 583,212 586,290 592,315 597,298 602,330 605,393 612,370 620,372 630,320 636,290 643,258 648,315 655,335 663,358 669,345 675,395 682,370 688,392 692,360 697,372 703,322 707,365 711,318 716,325 722,280 730,315 740,270 748,282 755,240 763,195 768,240 773,315 780,230 786,210 792,230 797,280 802,265 811,360 815,260 824,240 830,282 836,235 841,258 848,210 857,182 863,225 866,185 869,236 874,190 879,230 886,152 890,205 895,60 900,10 903,-57 907,0 910,30 913,130 916,385 919,378 921,210 923,290 926,190 930,265 935,335 938,205 944,142 950,190 957,140 965,55 968,120 972,85 976,138 981,95 985,20 988,70 992,150 996,90 1000,50 1004,115 1011,160 1015,110 1021,98 1027,185 1033,135 1038,160 1045,122 1052,125 1059,165 1065,105 1072,65 1076,85 1080,5" },
  { x: 2220, y: -30, pts: "0,875 3,905 8,950 12,940 17,830 22,855 26,880 30,820 35,765 38,805 42,740 48,740 50,765 56,785 62,740 65,725 67,780 71,740 76,820 80,768 84,805 88,775 92,830 97,860 101,795 106,820 110,835 116,855 121,805 125,775 130,820 134,845 138,810 141,838 146,800 149,738 153,790 158,740 161,765 167,700 173,680 176,705 179,618 183,650 188,715 193,700 197,622 201,680 207,658 213,672 215,650 219,675 224,600 230,565 235,510 239,540 243,518 248,508 254,545 260,575 266,612 272,555 278,555 285,608 291,585 297,560 302,605 306,580 310,736 313,650 316,635 322,692 330,670 332,635 337,650 341,600 344,510 346,545 353,495 357,525 360,370 363,228 366,110 368,65 370,180 372,350 375,450 377,590 380,633 382,560 386,585 389,455 392,500 394,443 398,520 401,575 404,600 410,570 418,530 424,540 431,525 434,473 439,500 443,575 448,545 452,580 457,620 463,550 472,585 475,560 478,590 484,562 488,590 492,600 496,650 498,685 500,620 504,660 510,608 514,632 522,600 525,552 530,595 540,558 545,600 549,650 552,630 557,660 563,605 568,635 573,625 580,590 583,622 588,585 592,605 600,635 605,620 612,640 617,640 620,600 626,612 632,640 636,655 640,615 647,590 655,590 658,578 662,618 667,590 673,595 680,635 685,620 692,640 695,658 702,635 708,665 715,678 720,655 726,675 732,680 737,720 741,670 745,700 751,675 758,650 766,675 773,648 780,665 787,685 792,680 795,730 800,715 807,748 813,725 818,740 822,735 827,765 835,745 842,775 847,802 850,760 854,742 858,775 864,775 868,843 872,805 878,840 882,862 886,790 892,790 898,800 905,795 910,800 915,775 921,795 928,757 935,765 940,750 944,768 952,740 958,738 967,690 973,715 979,630 985,690 989,655 992,685 998,650 1004,665 1010,645 1016,680 1020,645 1025,665 1030,702 1034,630 1041,655 1045,640 1052,690 1060,655 1066,685 1075,645 1081,695 1087,675 1095,665 1103,680 1106,648 1110,705 1116,705 1122,695 1126,690 1132,650 1136,693 1143,665 1150,672 1156,740 1166,752 1174,725 1183,745 1192,710 1198,720 1204,732 1210,670 1214,700 1219,672 1225,732 1229,715 1236,730 1244,735 1250,655 1257,665 1268,650 1273,630 1276,675 1285,632 1291,680 1297,605 1303,660 1308,665 1316,680 1322,742 1327,735 1332,757 1340,738 1347,745 1352,725 1356,745 1366,755 1375,750 1386,780 1396,785 1403,812 1409,772 1414,800 1417,978 1420,910 1423,865 1426,940 1430,885 1435,865 1440,875 1444,842" }
];

let seed = 7;
const rnd = () => (seed = (seed * 16807) % 2147483647) / 2147483647;
const out = { up: "", down: "", flat: "" };

for (const b of blocks) {
  const pts = b.pts.split(" ").map(p => p.split(",").map(Number)).map(([x, y]) => [x + b.x, y + b.y]);
  const at = x => {
    let i = 1;
    while (i < pts.length - 1 && pts[i][0] < x) i++;
    const [x0, y0] = pts[i - 1], [x1, y1] = pts[i];
    const t = Math.min(1, Math.max(0, (x - x0) / (x1 - x0)));
    return y0 + (y1 - y0) * t;
  };
  const end = pts[pts.length - 1][0];
  for (let x = Math.floor(pts[0][0] / 3) * 3; x < end; x += 3) {
    const a = at(x), c = at(x + 3);
    let hi = Math.min(a, c), lo = Math.max(a, c);
    // Turning points that fall inside the candle set its wick
    for (const [px, py] of pts) if (px >= x && px < x + 3) { hi = Math.min(hi, py); lo = Math.max(lo, py); }
    if (lo - hi < 40) { hi -= rnd() * 9 + 3; lo += rnd() * 9 + 3; }
    let kind = c < a ? "up" : "down";
    const r = rnd();
    if (Math.abs(a - c) < 12 && r < 0.2) kind = r < 0.04 ? "flat" : kind === "up" ? "down" : "up";
    out[kind] += `M${x + 1.5} ${Math.round(hi / 3) * 3}V${Math.round(lo / 3) * 3}`;
  }
}
for (const k in out) document.getElementById(k).setAttribute("d", out[k]);
```
